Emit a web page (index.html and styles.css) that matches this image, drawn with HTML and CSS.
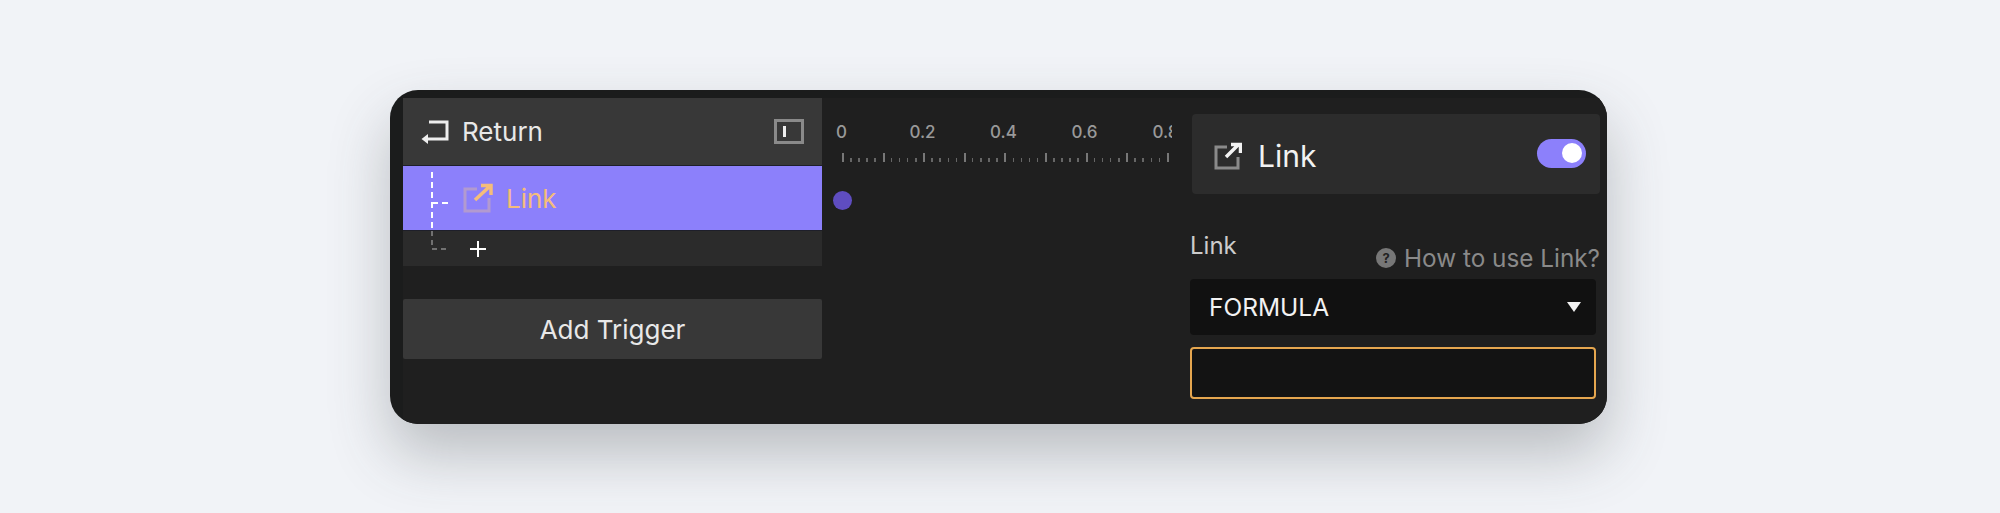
FILE: index.html
```html
<!DOCTYPE html>
<html lang="en">

<head>
    <meta charset="UTF-8">
    <title>Link Trigger</title>
    <link rel="stylesheet" href="styles.css">
</head>

<body>
    <div class="frame">
        <div class="left">
            <div class="return-row">
                <svg class="return-icon" width="28" height="24" viewBox="0 0 28 24" fill="none">
                    <path d="M8 2H26V19H3" stroke="#eee" stroke-width="3" />
                    <path d="M0.5 19L7 14V24Z" fill="#eee" />
                </svg>
                <span class="return-label">Return</span>
                <div class="panel-icon"><div class="panel-bar"></div></div>
            </div>
            <div class="link-row">
                <svg class="link-icon" width="30" height="30" viewBox="0 0 30 30" fill="none">
                    <path d="M14 6H2V28H26V15" stroke="#b29ad0" stroke-width="3" />
                    <path d="M12 17L26 4M18 2.500H28V12" stroke="#f5bd7a" stroke-width="3.500" />
                </svg>
                <span class="link-label">Link</span>
            </div>
            <div class="add-row">
                <svg width="18" height="18" viewBox="0 0 18 18">
                    <path d="M9 1V17M1 9H17" stroke="#fff" stroke-width="2" />
                </svg>
            </div>
            <svg class="tree-lines" width="20" height="82" viewBox="0 0 20 82" fill="none">
                <path d="M1 0V57" stroke="#fff" stroke-width="2" stroke-dasharray="6 4" />
                <path d="M1 31H18" stroke="#fff" stroke-width="2" stroke-dasharray="6 4" />
                <path d="M1 59V77H18" stroke="#8a8a8a" stroke-width="1.500" stroke-dasharray="5 4" />
            </svg>
            <div class="add-trigger">Add Trigger</div>
        </div>
        <div class="timeline">
            <div class="scale">
                <span class="tick-label">0</span>
                <span class="tick-label">0.2</span>
                <span class="tick-label">0.4</span>
                <span class="tick-label">0.6</span>
                <span class="tick-label">0.8</span>
            </div>
            <div class="ruler"></div>
            <div class="dot"></div>
        </div>
        <div class="right">
            <div class="link-head">
                <svg class="head-icon" width="28" height="28" viewBox="0 0 28 28" fill="none">
                    <path d="M13 5H2V26H24V15" stroke="#8a8a8a" stroke-width="3" />
                    <path d="M12 15L24 3M17 2.500H26.500V11" stroke="#f2f2f2" stroke-width="3.500" />
                </svg>
                <span class="head-label">Link</span>
                <div class="toggle"><div class="knob"></div></div>
            </div>
            <div class="field-head">
                <span class="field-label">Link</span>
                <span class="help">
                    <span class="help-icon">?</span>
                    How to use Link?
                </span>
            </div>
            <div class="select">
                <span>FORMULA</span>
                <div class="caret"></div>
            </div>
            <div class="input"></div>
        </div>
    </div>
</body>

</html>
```

FILE: styles.css
```css
html,
body {
    height: 100%;
}

body {
    margin: 0;
    overflow: hidden;
    background-color: #f1f3f7;
    font-family: Inter, "Liberation Sans", sans-serif;
    padding: 90px 0 0 390px;
    box-sizing: border-box;
}

.frame {
    display: flex;
    width: 1217px;
    height: 334px;
    box-sizing: border-box;
    padding: 8px 0 0 13px;
    background-color: #1b1c1c;
    border-radius: 28px;
    overflow: hidden;
    box-shadow: 0 30px 60px rgba(60, 65, 70, 0.3);
}

.left {
    position: relative;
    flex: none;
    width: 419px;
    display: flex;
    flex-direction: column;
    background-color: #1f1f1f;
}

.return-row {
    display: flex;
    align-items: center;
    height: 67px;
    padding: 0 18px 0 18px;
    box-sizing: border-box;
    background-color: #383838;
}

.return-icon {
    flex: none;
}

.return-label {
    margin-left: 13px;
    font-size: 26px;
    color: #e8e8e8;
    flex: 1;
}

.panel-icon {
    display: flex;
    align-items: center;
    width: 30px;
    height: 25px;
    box-sizing: border-box;
    border: 3px solid #8a8a8a;
    padding-left: 6px;
}

.panel-bar {
    width: 3px;
    height: 11px;
    background-color: #eee;
}

.link-row {
    display: flex;
    align-items: center;
    height: 66px;
    box-sizing: border-box;
    padding-left: 60px;
    background-color: #8c80fb;
    border-top: 1px solid #1e1f2a;
    border-bottom: 1px solid #1e1f2a;
}

.link-label {
    margin-left: 13px;
    font-size: 26px;
    color: #f5bd7a;
}

.add-row {
    display: flex;
    align-items: center;
    height: 35px;
    padding-left: 66px;
    background-color: #2b2b2b;
}

/* dashed lines run across the rows */
.tree-lines {
    position: absolute;
    left: 28px;
    top: 74px;
}

.add-trigger {
    height: 60px;
    margin-top: 33px;
    display: flex;
    align-items: center;
    justify-content: center;
    background-color: #383838;
    color: #e8e8e8;
    font-size: 26px;
    border-radius: 2px;
}

.timeline {
    position: relative;
    flex: none;
    width: 350px;
    overflow: hidden;
    background-color: #1f1f1f;
}

.scale {
    display: flex;
    margin: 23px 0 0 -21px;
    height: 22px;
    align-items: center;
}

.tick-label {
    flex: none;
    width: 81px;
    text-align: center;
    font-size: 17px;
    font-weight: 500;
    color: #999;
}

.ruler {
    width: 327px;
    height: 9px;
    margin: 10px 0 0 20px;
    background-image:
        repeating-linear-gradient(to right, #777 0, #777 2px, transparent 2px, transparent 40.6px),
        repeating-linear-gradient(to right, #666 0, #666 1.5px, transparent 1.5px, transparent 8.12px);
    background-size: 100% 100%, 100% 4px;
    background-position: 0 0, 0 100%;
    background-repeat: no-repeat;
}

.dot {
    position: absolute;
    left: 11px;
    top: 93px;
    width: 19px;
    height: 19px;
    border-radius: 50%;
    background-color: #5f4dc0;
}

.right {
    flex: none;
    width: 435px;
    box-sizing: border-box;
    padding: 16px 7px 0 18px;
    display: flex;
    flex-direction: column;
    background-color: #1f1f1f;
}

.link-head {
    display: flex;
    align-items: center;
    height: 80px;
    flex: none;
    margin: 0 0 0 2px;
    padding: 3px 14px 0 22px;
    box-sizing: border-box;
    background-color: #2c2c2c;
    border-radius: 4px;
}

.head-icon {
    flex: none;
}

.head-label {
    flex: 1;
    margin-left: 16px;
    font-size: 30px;
    color: #f2f2f2;
}

.toggle {
    display: flex;
    align-items: center;
    justify-content: flex-end;
    width: 49px;
    height: 29px;
    margin-top: -5px;
    padding-right: 4px;
    box-sizing: border-box;
    border-radius: 15px;
    background-color: #8c80fb;
}

.knob {
    width: 20px;
    height: 20px;
    border-radius: 50%;
    background-color: #fff;
}

.field-head {
    display: flex;
    justify-content: space-between;
    align-items: flex-start;
    height: 85px;
    flex: none;
    padding-top: 37px;
    box-sizing: border-box;
}

.field-label {
    font-size: 24px;
    color: #ccc;
}

.help {
    display: flex;
    align-items: center;
    gap: 8px;
    margin-top: 12px;
    font-size: 24.3px;
    color: #8a8a8a;
}

.help-icon {
    width: 20px;
    height: 20px;
    border-radius: 50%;
    background-color: #777;
    color: #222;
    font-size: 13px;
    font-weight: 700;
    text-align: center;
    line-height: 20px;
}

.select {
    display: flex;
    align-items: center;
    justify-content: space-between;
    width: 406px;
    height: 56px;
    box-sizing: border-box;
    padding: 0 15px 0 19px;
    background-color: #111;
    border-radius: 4px;
    color: #f2f2f2;
    font-size: 24.5px;
}

.caret {
    width: 0;
    height: 0;
    border-left: 7px solid transparent;
    border-right: 7px solid transparent;
    border-top: 10px solid #f2f2f2;
}

.input {
    width: 406px;
    height: 52px;
    margin-top: 12px;
    box-sizing: border-box;
    border: 2px solid #e5a64f;
    border-radius: 4px;
    background-color: #131313;
}
```
